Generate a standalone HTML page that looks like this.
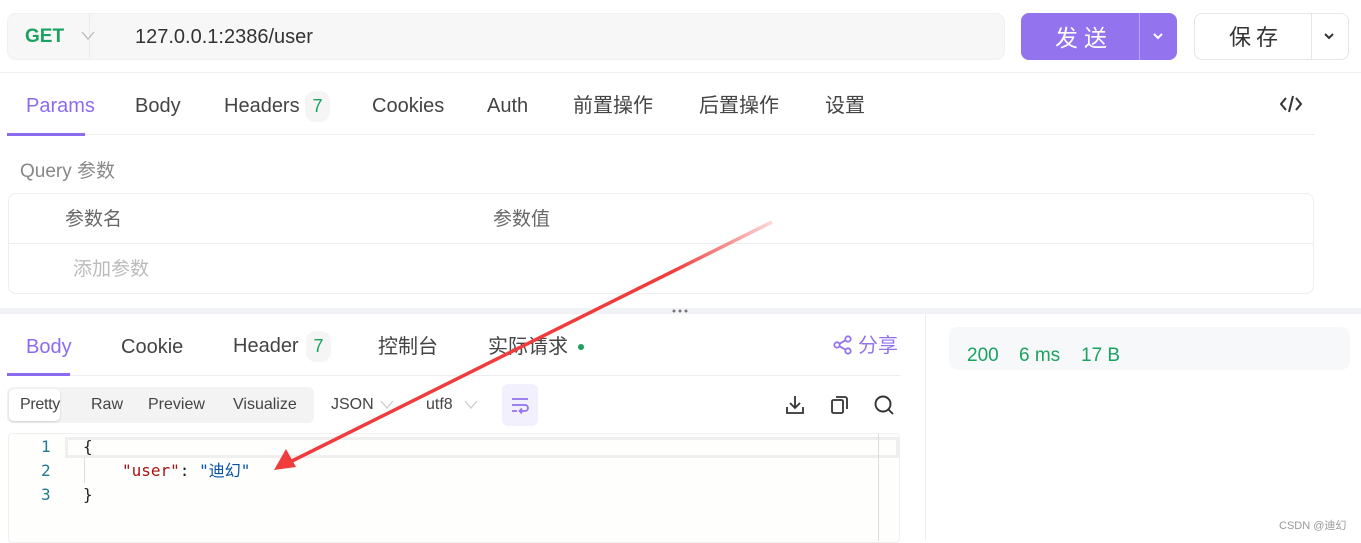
<!DOCTYPE html>
<html><head><meta charset="utf-8"><style>
*{margin:0;padding:0;box-sizing:border-box}
body{width:1361px;height:541px;overflow:hidden;background:#fff;font-family:"Liberation Sans","Noto Sans CJK SC",sans-serif;position:relative;color:#333}
.a{position:absolute;white-space:nowrap;line-height:30px;height:30px}
.t{font-size:20px;color:#444}
.b{height:auto;line-height:normal}
</style></head><body>
<div class="a b" style="left:7px;top:13px;width:998px;height:47px;background:#f7f7f7;border-radius:9px;border:1px solid #f0f0f0"></div>
<div class="a b" style="left:89px;top:14px;width:1px;height:45px;background:#ececec"></div>
<div class="a" style="left:25px;top:22px;font-size:19px;font-weight:bold;color:#1aa260">GET</div>
<svg class="a b" style="left:81px;top:31px" width="14" height="10"><path d="M1 1L7 8L13 1" fill="none" stroke="#bbb" stroke-width="1.3"/></svg>
<div class="a" style="left:135px;top:22px;font-size:20px;color:#333">127.0.0.1:2386/user</div>
<div class="a b" style="left:1021px;top:13px;width:156px;height:47px;background:#9373ee;border-radius:8px"></div>
<div class="a b" style="left:1139px;top:13px;width:1px;height:47px;background:#b9a6f5"></div>
<div class="a" style="left:1055px;top:23px;font-size:23px;color:#fff;letter-spacing:6px">发送</div>
<svg class="a b" style="left:1152px;top:32px" width="12" height="8"><path d="M2 2L6 6L10 2" fill="none" stroke="#fff" stroke-width="2"/></svg>
<div class="a b" style="left:1194px;top:13px;width:155px;height:47px;border:1px solid #e6e6e6;border-radius:8px"></div>
<div class="a b" style="left:1311px;top:14px;width:1px;height:45px;background:#e6e6e6"></div>
<div class="a" style="left:1229px;top:23px;font-size:22px;color:#333;letter-spacing:5px">保存</div>
<svg class="a b" style="left:1323px;top:32px" width="12" height="8"><path d="M2 2L6 6L10 2" fill="none" stroke="#333" stroke-width="2"/></svg>
<div class="a b" style="left:0;top:72px;width:1361px;height:1px;background:#f0f0f0"></div>

<div class="a t" style="left:26px;top:91px;color:#8b6cf0">Params</div>
<div class="a t" style="left:135px;top:91px">Body</div>
<div class="a t" style="left:224px;top:91px">Headers</div>
<div class="a b" style="left:305px;top:91px;width:25px;height:31px;background:#f5f5f5;border-radius:10px;color:#1aa260;font-size:18px;text-align:center;line-height:31px">7</div>
<div class="a t" style="left:372px;top:91px">Cookies</div>
<div class="a t" style="left:487px;top:91px">Auth</div>
<div class="a t" style="left:573px;top:91px">前置操作</div>
<div class="a t" style="left:699px;top:91px">后置操作</div>
<div class="a t" style="left:825px;top:91px">设置</div>
<svg class="a b" style="left:1279px;top:94px" width="24" height="20"><path d="M7 4L2 10L7 16M17 4L22 10L17 16M14 2L10 18" fill="none" stroke="#333" stroke-width="2"/></svg>
<div class="a b" style="left:7px;top:134px;width:1308px;height:1px;background:#eee"></div>
<div class="a b" style="left:7px;top:133px;width:78px;height:3px;background:#8b6cf0"></div>

<div class="a" style="left:20px;top:157px;font-size:19px;color:#888">Query 参数</div>
<div class="a b" style="left:8px;top:193px;width:1306px;height:101px;border:1px solid #eee;border-radius:8px"></div>
<div class="a b" style="left:8px;top:243px;width:1306px;height:1px;background:#eee"></div>
<div class="a" style="left:65px;top:205px;font-size:19px;color:#666">参数名</div>
<div class="a" style="left:493px;top:205px;font-size:19px;color:#666">参数值</div>
<div class="a" style="left:73px;top:255px;font-size:19px;color:#bbb">添加参数</div>

<div class="a b" style="left:0;top:308px;width:1361px;height:6px;background:#f1f2f6"></div>
<svg class="a b" style="left:671px;top:309px" width="18" height="4"><circle cx="3" cy="2" r="1.5" fill="#777"/><circle cx="9" cy="2" r="1.5" fill="#777"/><circle cx="15" cy="2" r="1.5" fill="#777"/></svg>
<div class="a b" style="left:925px;top:314px;width:1px;height:227px;background:#eee"></div>

<div class="a t" style="left:26px;top:332px;color:#8b6cf0">Body</div>
<div class="a t" style="left:121px;top:332px">Cookie</div>
<div class="a t" style="left:233px;top:331px">Header</div>
<div class="a b" style="left:306px;top:331px;width:25px;height:31px;background:#f5f5f5;border-radius:10px;color:#1aa260;font-size:18px;text-align:center;line-height:31px">7</div>
<div class="a t" style="left:378px;top:332px">控制台</div>
<div class="a t" style="left:488px;top:332px">实际请求</div>
<div class="a b" style="left:578px;top:344px;width:6px;height:6px;border-radius:3px;background:#1aa260"></div>
<svg class="a b" style="left:833px;top:335px" width="20" height="20"><g fill="none" stroke="#9373ee" stroke-width="1.8"><circle cx="15" cy="4" r="2.7"/><circle cx="4" cy="10" r="2.7"/><circle cx="15" cy="16" r="2.7"/><path d="M6.5 8.7L12.5 5.3M6.5 11.3L12.5 14.7"/></g></svg>
<div class="a t" style="left:858px;top:331px;color:#9373ee">分享</div>
<div class="a b" style="left:7px;top:375px;width:893px;height:1px;background:#eee"></div>
<div class="a b" style="left:7px;top:373px;width:63px;height:3px;background:#8b6cf0"></div>

<div class="a b" style="left:7px;top:387px;width:307px;height:36px;background:#f3f3f3;border-radius:6px"></div>
<div class="a b" style="left:9px;top:389px;width:51px;height:32px;background:#fff;border-radius:5px;box-shadow:0 1px 2px rgba(0,0,0,.15)"></div>
<div class="a" style="left:20px;top:390px;font-size:16px;color:#444;letter-spacing:-0.3px">Pretty</div>
<div class="a" style="left:91px;top:390px;font-size:16px;color:#444">Raw</div>
<div class="a" style="left:148px;top:390px;font-size:16px;color:#444">Preview</div>
<div class="a" style="left:233px;top:390px;font-size:16px;color:#444">Visualize</div>
<div class="a" style="left:331px;top:390px;font-size:16px;color:#444">JSON</div>
<svg class="a b" style="left:380px;top:400px" width="14" height="10"><path d="M1 1L7 8L13 1" fill="none" stroke="#ccc" stroke-width="1.3"/></svg>
<div class="a" style="left:426px;top:390px;font-size:16px;color:#444">utf8</div>
<svg class="a b" style="left:464px;top:400px" width="14" height="10"><path d="M1 1L7 8L13 1" fill="none" stroke="#ccc" stroke-width="1.3"/></svg>
<div class="a b" style="left:502px;top:384px;width:36px;height:42px;background:#f3f0fd;border-radius:6px"></div>
<svg class="a b" style="left:510px;top:396px" width="20" height="18"><g fill="none" stroke="#9373ee" stroke-width="1.7"><path d="M2 3H18M2 9H15a3 3 0 0 1 0 6H10M12 12.5L9.5 15L12 17.5M2 15H7"/></g></svg>
<svg class="a b" style="left:784px;top:394px" width="22" height="22"><g fill="none" stroke="#333" stroke-width="1.8"><path d="M11 2V14M6 9L11 14L16 9M3 13V19H19V13"/></g></svg>
<svg class="a b" style="left:829px;top:394px" width="22" height="22"><g fill="none" stroke="#333" stroke-width="1.8"><rect x="3" y="6" width="11" height="13" rx="1.5"/><path d="M7 3H16a2 2 0 0 1 2 2V15"/></g></svg>
<svg class="a b" style="left:873px;top:394px" width="22" height="22"><g fill="none" stroke="#333" stroke-width="1.9"><circle cx="10" cy="10" r="7.5"/><path d="M15.5 15.5L20 20"/></g></svg>

<div class="a b" style="left:8px;top:433px;width:892px;height:110px;border:1px solid #f0f0f0;background:#fefefc;border-radius:4px"></div>
<div class="a b" style="left:65px;top:437px;width:834px;height:21px;border:3px solid #efefef"></div>
<div class="a b" style="left:878px;top:434px;width:1px;height:107px;background:#ddd"></div>
<div class="a b" style="left:84px;top:457px;width:1px;height:26px;background:#ddd"></div>
<div class="a b" style="font-family:'DejaVu Sans Mono','Noto Sans CJK SC',monospace;font-size:16px;left:0;top:435px">
<div class="a" style="left:41px;top:0;line-height:24px;color:#237893">1</div>
<div class="a" style="left:41px;top:24px;line-height:24px;color:#237893">2</div>
<div class="a" style="left:41px;top:48px;line-height:24px;color:#237893">3</div>
<div class="a" style="left:83px;top:0;line-height:24px;color:#222">{</div>
<div class="a" style="left:122px;top:24px;line-height:24px"><span style="color:#a31515">"user"</span><span style="color:#222">: </span><span style="color:#0451a5">"迪幻"</span></div>
<div class="a" style="left:83px;top:48px;line-height:24px;color:#222">}</div>
</div>

<div class="a b" style="left:949px;top:327px;width:401px;height:43px;background:#f7f8fa;border-radius:9px"></div>
<div class="a" style="left:967px;top:341px;font-size:19px;color:#1aa260">200</div>
<div class="a" style="left:1019px;top:341px;font-size:19px;color:#1aa260">6 ms</div>
<div class="a" style="left:1081px;top:341px;font-size:19px;color:#1aa260">17 B</div>
<div class="a" style="left:1279px;top:511px;font-size:11px;color:#999">CSDN @迪幻</div>

<svg class="a b" style="left:0;top:0" width="1361" height="541"><defs><linearGradient id="g" x1="772" y1="222" x2="275" y2="470" gradientUnits="userSpaceOnUse"><stop offset="0" stop-color="#f03c3c" stop-opacity="0.2"/><stop offset="0.2" stop-color="#f03c3c"/><stop offset="1" stop-color="#f03c3c"/></linearGradient></defs>
<path d="M772 222L290 462" stroke="url(#g)" stroke-width="3.5" fill="none"/>
<polygon points="274,470 286,449 296,467" fill="#f03c3c"/></svg>
</body></html>
